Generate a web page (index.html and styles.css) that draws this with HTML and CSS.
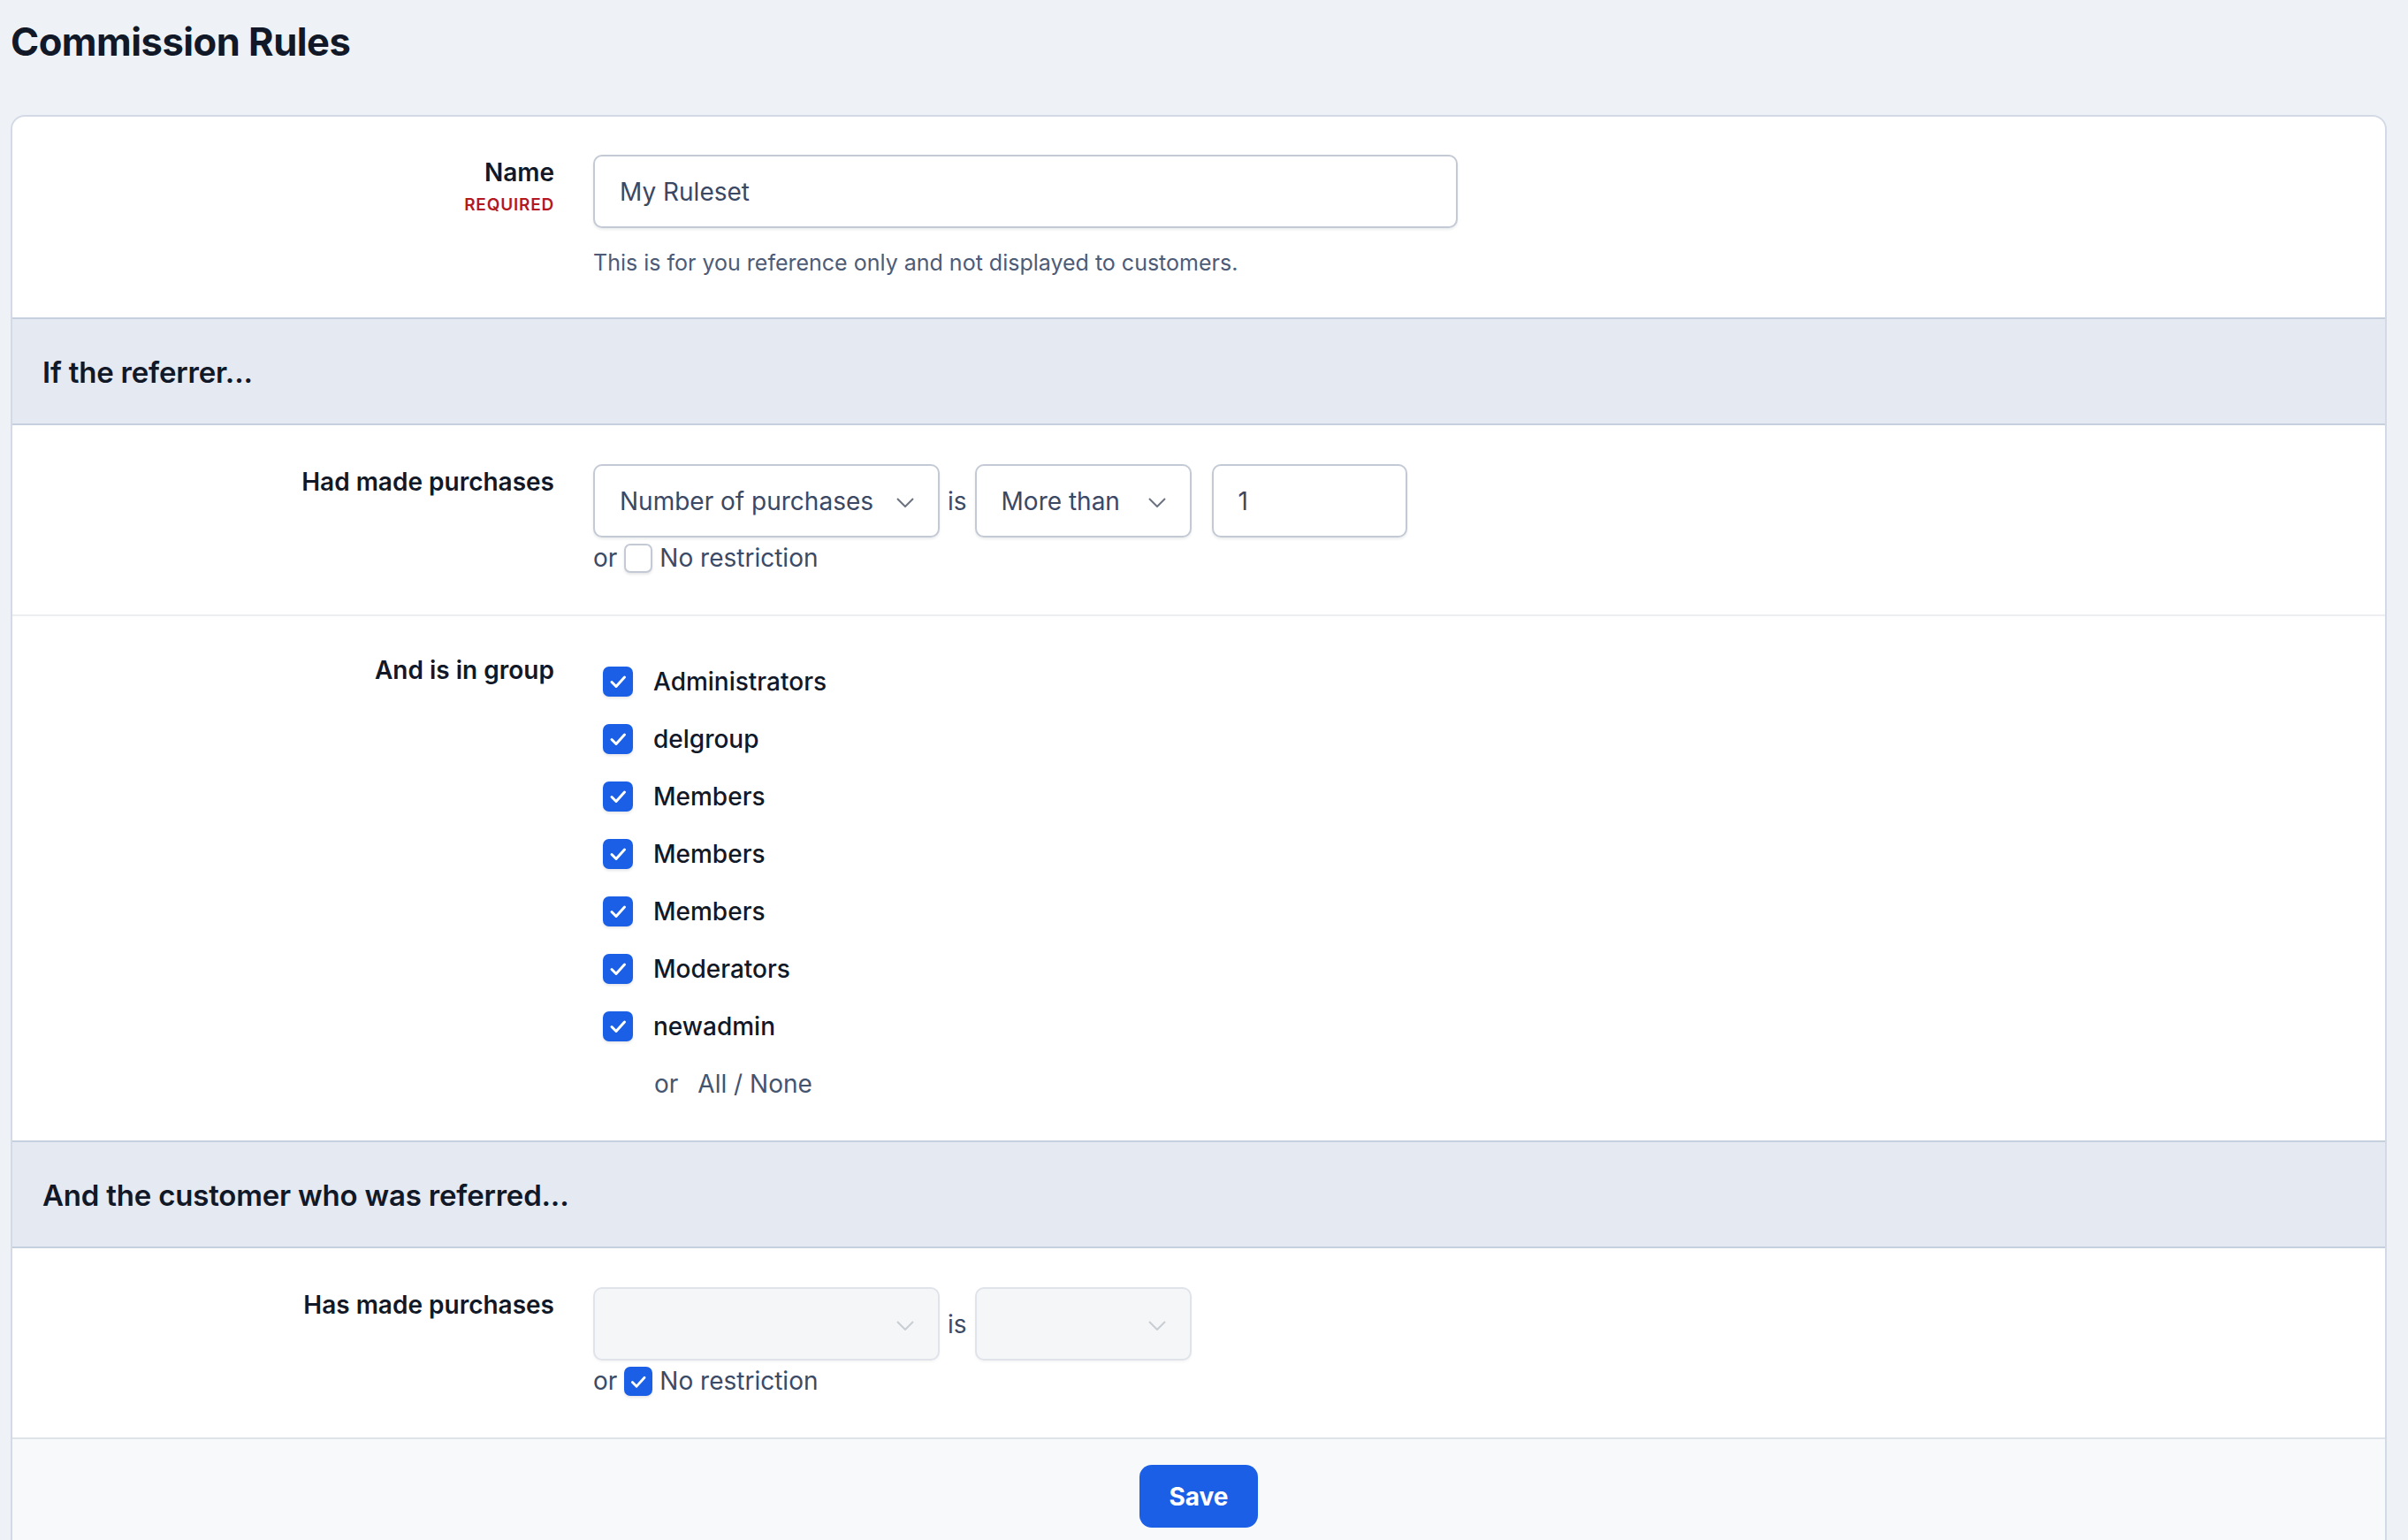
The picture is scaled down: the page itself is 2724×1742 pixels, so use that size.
FILE: index.html
```html
<!DOCTYPE html>
<html lang="en">
<head>
    <meta charset="UTF-8">
    <meta name="viewport" content="width=device-width, initial-scale=1.0">
    <title>Commission Rules</title>
    <link rel="stylesheet" href="styles.css">
</head>
<body>
    <h1 class="page-title">Commission Rules</h1>

    <form class="card">
        <div class="row row-name">
            <div class="row-label">
                <label for="rulesetName">Name</label>
                <span class="required">Required</span>
            </div>
            <div class="row-body">
                <input id="rulesetName" class="field name-field" type="text" value="My Ruleset">
                <p class="hint">This is for you reference only and not displayed to customers.</p>
            </div>
        </div>

        <div class="section-head">If the referrer...</div>

        <div class="row row-split">
            <div class="row-label"><label>Had made purchases</label></div>
            <div class="row-body">
                <div class="condition">
                    <div class="select select-type">
                        <span class="select-value">Number of purchases</span>
                        <svg class="chevron" viewBox="0 0 20 11"><polyline points="1,1 10,10 19,1"/></svg>
                    </div>
                    <span class="word">is</span>
                    <div class="select select-op">
                        <span class="select-value">More than</span>
                        <svg class="chevron" viewBox="0 0 20 11"><polyline points="1,1 10,10 19,1"/></svg>
                    </div>
                    <input class="field amount-field" type="text" value="1">
                </div>
                <div class="or-line">
                    <span class="word">or</span>
                    <span class="box box-small"></span>
                    <span class="word">No restriction</span>
                </div>
            </div>
        </div>

        <div class="row row-groups">
            <div class="row-label"><label>And is in group</label></div>
            <div class="row-body">
                <ul class="group-list">
                    <li><span class="box checked"><svg viewBox="0 0 34 34"><polyline points="10,17.5 15,22.5 24.5,12"/></svg></span>Administrators</li>
                    <li><span class="box checked"><svg viewBox="0 0 34 34"><polyline points="10,17.5 15,22.5 24.5,12"/></svg></span>delgroup</li>
                    <li><span class="box checked"><svg viewBox="0 0 34 34"><polyline points="10,17.5 15,22.5 24.5,12"/></svg></span>Members</li>
                    <li><span class="box checked"><svg viewBox="0 0 34 34"><polyline points="10,17.5 15,22.5 24.5,12"/></svg></span>Members</li>
                    <li><span class="box checked"><svg viewBox="0 0 34 34"><polyline points="10,17.5 15,22.5 24.5,12"/></svg></span>Members</li>
                    <li><span class="box checked"><svg viewBox="0 0 34 34"><polyline points="10,17.5 15,22.5 24.5,12"/></svg></span>Moderators</li>
                    <li><span class="box checked"><svg viewBox="0 0 34 34"><polyline points="10,17.5 15,22.5 24.5,12"/></svg></span>newadmin</li>
                </ul>
                <div class="all-none">
                    <span>or</span>
                    <a href="#">All / None</a>
                </div>
            </div>
        </div>

        <div class="section-head">And the customer who was referred...</div>

        <div class="row row-split row-last">
            <div class="row-label"><label>Has made purchases</label></div>
            <div class="row-body">
                <div class="condition">
                    <div class="select select-type disabled">
                        <span class="select-value"></span>
                        <svg class="chevron" viewBox="0 0 20 11"><polyline points="1,1 10,10 19,1"/></svg>
                    </div>
                    <span class="word">is</span>
                    <div class="select select-op disabled">
                        <span class="select-value"></span>
                        <svg class="chevron" viewBox="0 0 20 11"><polyline points="1,1 10,10 19,1"/></svg>
                    </div>
                </div>
                <div class="or-line">
                    <span class="word">or</span>
                    <span class="box box-small checked"><svg viewBox="0 0 34 34"><polyline points="10,17.5 15,22.5 24.5,12"/></svg></span>
                    <span class="word">No restriction</span>
                </div>
            </div>
        </div>

        <div class="form-footer">
            <button type="button" class="save-button">Save</button>
        </div>
    </form>
</body>
</html>
```

FILE: styles.css
```css
body {
    margin: 0;
    padding: 0 24px 0 12px;
    background-color: #eef1f6;
    font-family: Inter, "Noto Sans", sans-serif;
    color: #111827;
}

.page-title {
    font-size: 43.5px;
    font-weight: 700;
    line-height: 50px;
    letter-spacing: -0.5px;
    margin: 22px 0 58px;
}

.card {
    background-color: #ffffff;
    border: 2px solid #d3dae5;
    border-radius: 16px;
    overflow: hidden;
}

/* Form rows */
.row {
    display: grid;
    grid-template-columns: 613px 1fr;
    column-gap: 44px;
    padding: 44px 0 47px;
}

.row-name {
    padding: 43px 0 44px;
}

.row-split {
    border-bottom: 2px solid #eceef2;
}

.row-groups {
    padding: 41px 0 32px;
}

.row-last {
    border-bottom: 2px solid #dfe3ea;
}

.row-label {
    text-align: right;
    display: flex;
    flex-direction: column;
    align-items: flex-end;
}

.row-label label {
    font-size: 28px;
    font-weight: 600;
    line-height: 40px;
}

.required {
    font-size: 19px;
    font-weight: 600;
    line-height: 28px;
    letter-spacing: 0.8px;
    text-transform: uppercase;
    color: #b3191f;
    margin-top: 3px;
}

.field {
    box-sizing: border-box;
    height: 83px;
    border: 2px solid #c4cad5;
    border-radius: 10px;
    box-shadow: 0 2px 3px rgba(15, 23, 42, 0.08);
    font-family: inherit;
    font-size: 28px;
    color: #3a4864;
    padding: 0 28px;
    outline: none;
    background-color: #ffffff;
}

.name-field {
    display: block;
    width: 978px;
}

.amount-field {
    width: 221px;
    margin-left: 14px;
}

.hint {
    margin: 21px 0 0;
    font-size: 25px;
    line-height: 36px;
    color: #4d5b77;
}

/* Section headers */
.section-head {
    background-color: #e5e9f2;
    border-top: 2px solid #c6cfdd;
    border-bottom: 2px solid #c6cfdd;
    height: 118px;
    line-height: 120px;
    padding: 0 34px;
    font-size: 33px;
    font-weight: 600;
    letter-spacing: -0.2px;
}

/* Selects */
.condition {
    display: flex;
    align-items: center;
    gap: 9px;
}

.select {
    box-sizing: border-box;
    position: relative;
    height: 83px;
    border: 2px solid #c4cad5;
    border-radius: 10px;
    box-shadow: 0 2px 3px rgba(15, 23, 42, 0.08);
    background-color: #ffffff;
    display: flex;
    align-items: center;
    padding: 0 28px;
}

.select-type {
    width: 392px;
}

.select-op {
    width: 245px;
}

.select-value {
    font-size: 28px;
    color: #3a4864;
}

.chevron {
    position: absolute;
    right: 27px;
    top: 36px;
    width: 20px;
    height: 11px;
    fill: none;
    stroke: #6b7280;
    stroke-width: 2;
}

.select.disabled {
    background-color: #f5f6f8;
    border-color: #e0e3e9;
    box-shadow: 0 2px 3px rgba(15, 23, 42, 0.04);
}

.select.disabled .chevron {
    stroke: #c9cdd4;
}

.word {
    font-size: 28px;
    color: #3b4a66;
}

.or-line {
    display: flex;
    align-items: center;
    gap: 8px;
    height: 34px;
    margin-top: 6px;
}

/* Checkboxes */
.box {
    box-sizing: border-box;
    display: inline-flex;
    width: 34px;
    height: 34px;
    border: 2px solid #c4cad5;
    border-radius: 7px;
    background-color: #ffffff;
    box-shadow: 0 2px 3px rgba(15, 23, 42, 0.1);
    flex-shrink: 0;
}

.box-small {
    width: 32px;
    height: 33px;
}

.box.checked {
    background-color: #1a5fe6;
    border-color: #1a5fe6;
}

.box svg {
    margin: -2px;
    width: 34px;
    height: 34px;
    fill: none;
    stroke: #ffffff;
    stroke-width: 3;
    stroke-linecap: round;
    stroke-linejoin: round;
}

.group-list {
    list-style: none;
    margin: 0;
    padding: 0 0 0 11px;
}

.group-list li {
    display: flex;
    align-items: center;
    gap: 23px;
    height: 65px;
    font-size: 28px;
    font-weight: 500;
    color: #111827;
}

.all-none {
    display: flex;
    align-items: center;
    gap: 22px;
    height: 65px;
    padding-left: 69px;
    font-size: 28px;
    color: #475670;
}

.all-none a {
    color: #44546f;
    text-decoration: none;
}

/* Footer */
.form-footer {
    background-color: #f8f9fb;
    padding: 29px 0;
    text-align: center;
}

.save-button {
    height: 71px;
    padding: 0 33px;
    border: none;
    border-radius: 14px;
    background-color: #1a5fe6;
    color: #ffffff;
    font-family: inherit;
    font-size: 28px;
    font-weight: 700;
    cursor: pointer;
}
```
